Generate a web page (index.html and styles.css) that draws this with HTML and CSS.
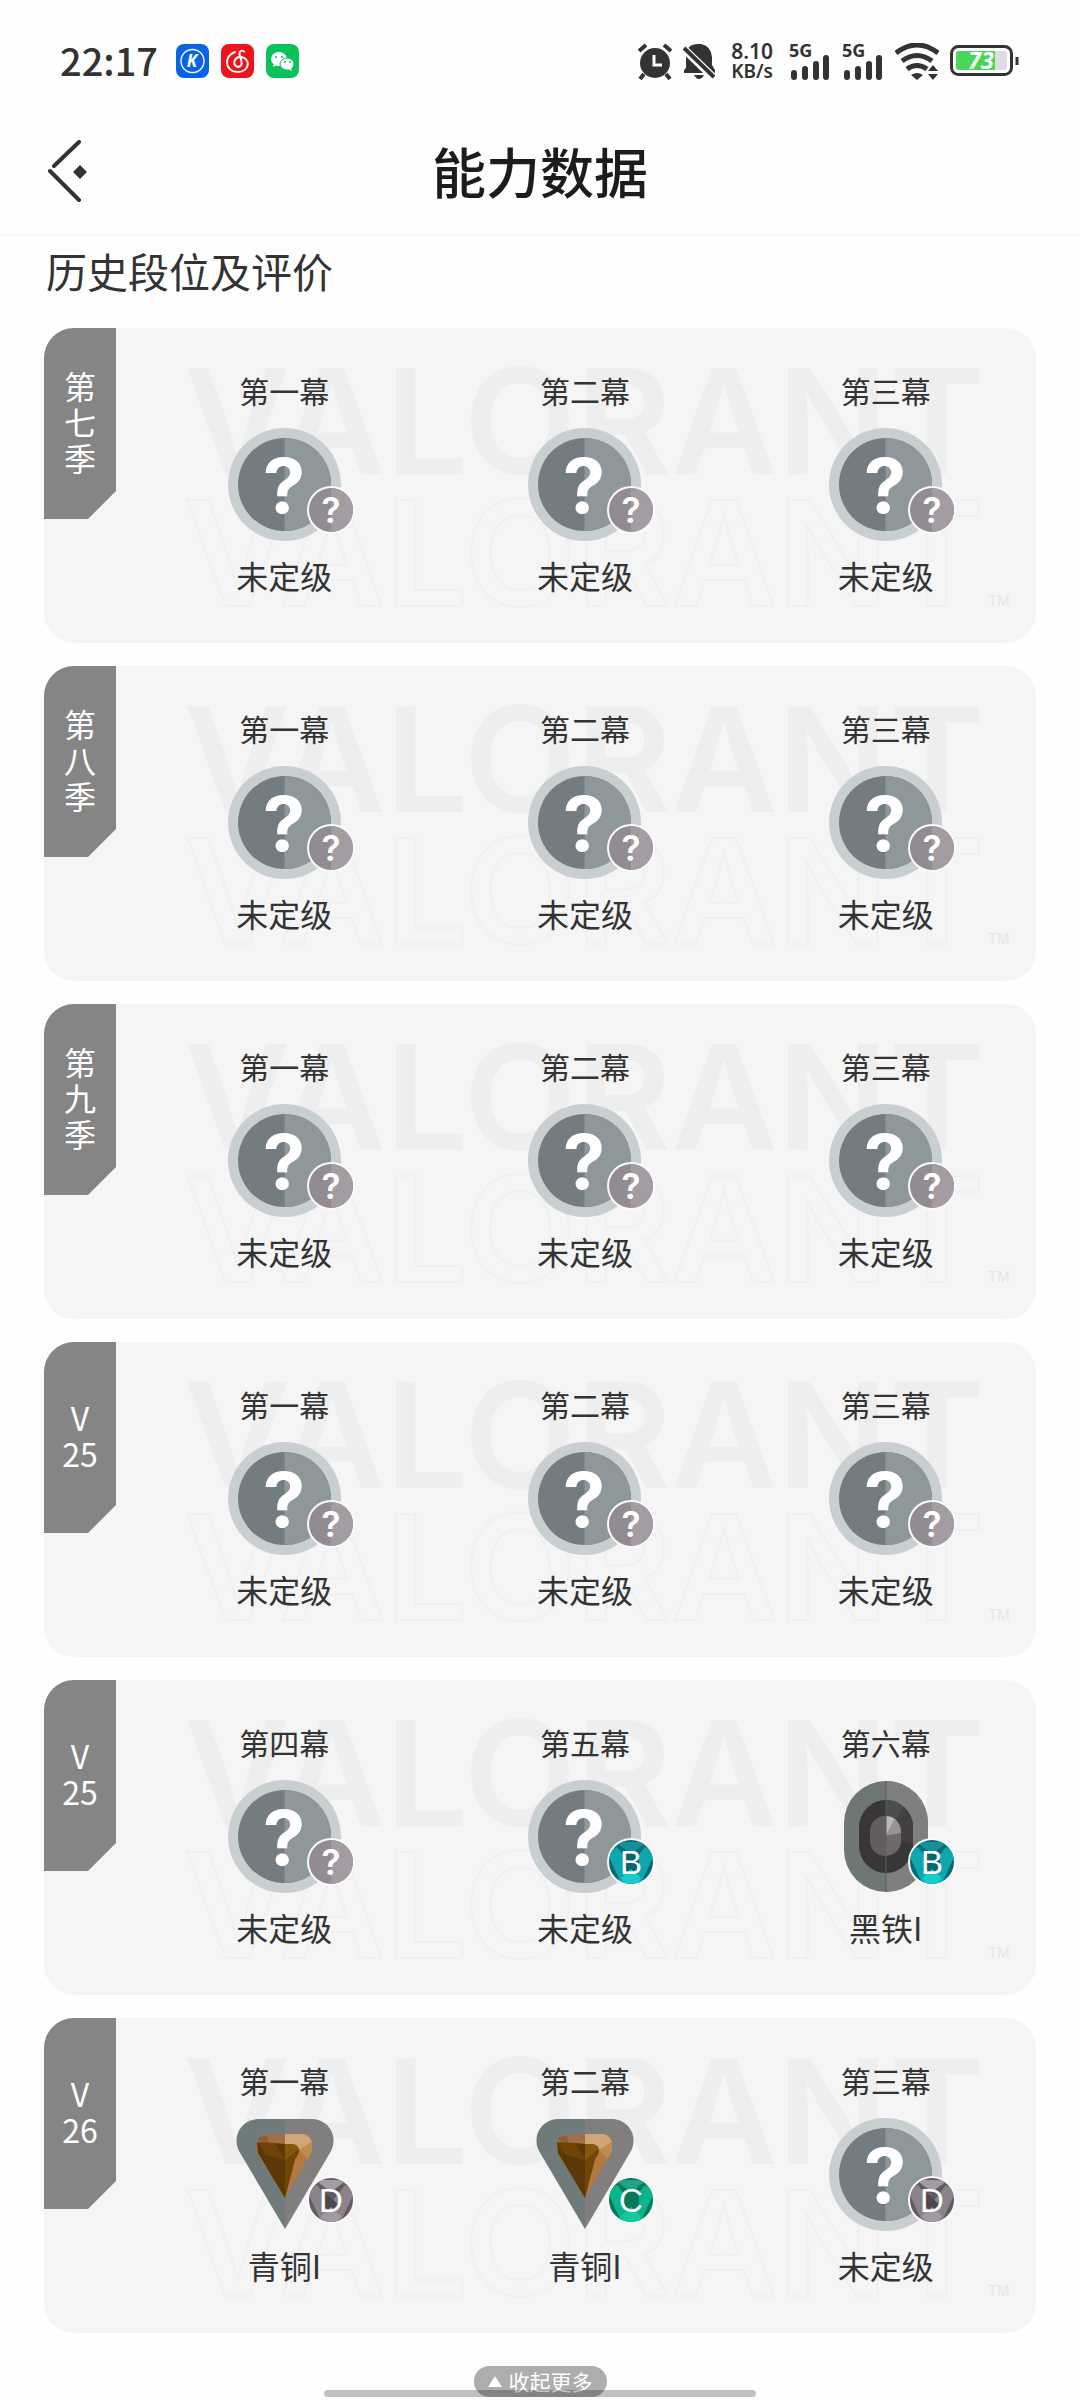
FILE: index.html
```html
<!DOCTYPE html>
<html lang="zh-CN">
<head>
    <meta charset="UTF-8">
    <meta name="viewport" content="width=device-width, initial-scale=1.0">
    <title>能力数据</title>
    <link rel="stylesheet" href="styles.css">
</head>
<body>
    <svg class="sprite" aria-hidden="true">
        <defs>
            <clipPath id="badge-clip"><circle cx="24" cy="24" r="22"/></clipPath>
        </defs>
        <symbol id="watermark" viewBox="0 0 850 260">
            <text class="wm-fill" x="0" y="111">VALORANT</text>
            <text class="wm-line" x="0" y="243">VALORANT</text>
            <text class="wm-tm" x="804" y="243">TM</text>
        </symbol>
        <symbol id="unranked" viewBox="0 0 113 113">
            <circle cx="56.5" cy="56.5" r="56.5" fill="#c9cfd1"/>
            <circle cx="56.5" cy="56.5" r="46.5" fill="#737c80"/>
            <path d="M56.5 10a46.5 46.5 0 0 1 0 93z" fill="#8e9799"/>
            <text class="rank-mark" x="56" y="85">?</text>
        </symbol>
        <symbol id="iron" viewBox="0 0 113 113">
            <rect x="15" y="1" width="84" height="111" rx="42" fill="#6f7775"/>
            <path d="M57 1a42 42 0 0 1 42 42v27a42 42 0 0 1-42 42z" fill="#7f7f7e"/>
            <rect x="30" y="20" width="54" height="73" rx="27" fill="#383637"/>
            <path d="M57 20v36l18-29q-8-7-18-7z" fill="#4a4e4c"/>
            <path d="M57 56l18-29q9 8 9 20v17z" fill="#434041"/>
            <rect x="41" y="36" width="31" height="40" rx="15" fill="#625d5e"/>
            <path d="M57 36v20l9-17q-4-3-9-3z" fill="#b9b7b7"/>
            <path d="M57 56l9-17q6 5 6 14z" fill="#979293"/>
            <path d="M57 56l15-3v9q-2 11-15 14z" fill="#6e696a"/>
            <path d="M57 1v111" stroke="#5a5d5c" stroke-width="1"/>
        </symbol>
        <symbol id="bronze" viewBox="0 0 113 113">
            <path d="M30 1h27v110L11 33C4 19 12 2 30 1z" fill="#6f7a7a"/>
            <path d="M57 1h27c18 1 26 18 19 32L57 111z" fill="#807f7e"/>
            <path d="M36 17l21-1v64L29 34q-3-12 7-17z" fill="#a06f48"/>
            <path d="M57 16h19q6 2 8 8v8L57 80z" fill="#b5793f"/>
            <path d="M57 16h19q6 2 8 8l-13 8-5-6h-9z" fill="#d0a577"/>
            <path d="M84 24v9l-4 8-9-9z" fill="#c08b51"/>
            <path d="M30 22l11 4-2-8q-8 0-9 4z" fill="#8f5c38"/>
            <path d="M29 24q4 5 10 5l8-4 10 1v54L30 35z" fill="#5d3806"/>
            <path d="M57 26h8q5 1 6 5 0 6-4 10L57 80z" fill="#85580c"/>
            <path d="M29 24l9 13 19 5-10-17z" fill="#704407"/>
            <path d="M57 42l14-11q0 5-4 10L57 80z" fill="#704605"/>
        </symbol>
        <symbol id="badge-q" viewBox="0 0 48 48">
            <circle cx="24" cy="24" r="24" fill="#fafafa"/>
            <circle cx="24" cy="24" r="22" fill="#928b91"/>
            <path d="M24 2a22 22 0 0 1 0 44z" fill="#a39da3"/>
            <text class="badge-mark" x="24" y="37">?</text>
        </symbol>
        <symbol id="badge-b" viewBox="0 0 48 48">
            <circle cx="24" cy="24" r="24" fill="#f4fbfb"/>
            <g clip-path="url(#badge-clip)">
                <path d="M0 0h48v48H0z" fill="#076a72"/>
                <path d="M8 4h32L24 16z" fill="#13929a"/>
                <path d="M0 15l10-6 14 18L38 9l10 6-14 30H14z" fill="#0fa6ad"/>
                <path d="M16 15h16v14l-8 8-8-8z" fill="#07656d"/>
                <path d="M14 40l10-9 10 9-4 8H18z" fill="#18c9cd"/>
            </g>
            <text class="badge-letter" x="24" y="36">B</text>
        </symbol>
        <symbol id="badge-c" viewBox="0 0 48 48">
            <circle cx="24" cy="24" r="24" fill="#f4fbf9"/>
            <g clip-path="url(#badge-clip)">
                <path d="M0 0h48v48H0z" fill="#07785c"/>
                <path d="M8 4h32L24 16z" fill="#20a486"/>
                <path d="M0 15l10-6 14 18L38 9l10 6-14 30H14z" fill="#0db48b"/>
                <path d="M16 15h16v14l-8 8-8-8z" fill="#07795f"/>
                <path d="M14 40l10-9 10 9-4 8H18z" fill="#18c79d"/>
            </g>
            <text class="badge-letter" x="24" y="36">C</text>
        </symbol>
        <symbol id="badge-d" viewBox="0 0 48 48">
            <circle cx="24" cy="24" r="24" fill="#faf8fa"/>
            <g clip-path="url(#badge-clip)">
                <path d="M0 0h48v48H0z" fill="#625961"/>
                <path d="M8 4h32L24 16z" fill="#a39ba2"/>
                <path d="M0 15l10-6 14 18L38 9l10 6-14 30H14z" fill="#8b838a"/>
                <path d="M16 15l16 14-8 8-8-8z" fill="#4e464d"/>
                <path d="M14 40l10-9 10 9-4 8H18z" fill="#a29aa1"/>
            </g>
            <text class="badge-letter" x="24" y="36">D</text>
        </symbol>
        <symbol id="signal" viewBox="0 0 42 37">
            <text class="net-type" x="0" y="14">5G</text>
            <path d="M5 30v4M16 26v8M27 21v13M37 15v19" stroke="#333" stroke-width="6" stroke-linecap="round"/>
        </symbol>
    </svg>

    <div class="status-bar">
        <div class="status-left">
            <time class="clock">22:17</time>
            <svg class="app-icon" viewBox="0 0 33 34" role="img" aria-label="K">
                <rect width="33" height="34" rx="8" fill="#0863ea"/>
                <circle cx="16.500" cy="17" r="11.500" fill="none" stroke="#fff" stroke-width="1.400"/>
                <text class="k-mark" x="16" y="23">K</text>
            </svg>
            <svg class="app-icon" viewBox="0 0 33 34" role="img" aria-label="音乐">
                <rect width="33" height="34" rx="8" fill="#f0131b"/>
                <path d="M14 8C2 12 4 28 16.500 28 29 28 30 14 20 13c-6-1-9 7-4.500 9.500 4 1.500 6-2 5-5L18.500 10c-.5-3 2-4 4.500-2.500" fill="none" stroke="#fff" stroke-width="2" stroke-linecap="round"/>
            </svg>
            <svg class="app-icon" viewBox="0 0 33 34" role="img" aria-label="微信">
                <rect width="33" height="34" rx="8" fill="#0ac25b"/>
                <path d="M8 19l-1 4 4-2z" fill="#fff"/>
                <ellipse cx="13" cy="15" rx="8" ry="7" fill="#fff"/>
                <ellipse cx="21" cy="20" rx="7" ry="6" fill="#fff" stroke="#0ac25b"/>
                <path d="M22 25l4 2-1-3z" fill="#fff"/>
                <g fill="#0ac25b"><circle cx="10" cy="13" r="1"/><circle cx="16" cy="13" r="1"/><circle cx="19" cy="18" r="1"/><circle cx="24" cy="18" r="1"/></g>
            </svg>
        </div>
        <div class="status-right">
            <svg width="34" height="37" viewBox="0 0 34 37" role="img" aria-label="闹钟">
                <circle cx="17" cy="20" r="15" fill="#333"/>
                <path d="M1 8l7-6M33 8l-7-6M6 31l-4 5M28 31l4 5" stroke="#333" stroke-width="4"/>
                <path d="M16 12v10h8" fill="none" stroke="#fdfdfd" stroke-width="3"/>
            </svg>
            <svg width="32" height="37" viewBox="0 0 32 37" role="img" aria-label="静音">
                <path d="M3 25V12Q4 1 15 1h3q10 2 11 13v8l3 5v3H1v-3z" fill="#333"/>
                <path d="M11 32h10q-2 4-5 4t-5-4z" fill="#333"/>
                <path d="M-1 4l33 32" stroke="#fdfdfd" stroke-width="8"/>
                <path d="M1 5l30 29" stroke="#333" stroke-width="4"/>
            </svg>
            <div class="net-speed"><b>8.10</b><span>KB/s</span></div>
            <svg width="42" height="37" role="img" aria-label="5G 信号"><use href="#signal"/></svg>
            <svg width="42" height="37" role="img" aria-label="5G 信号"><use href="#signal"/></svg>
            <svg width="44" height="37" viewBox="0 0 44 37" role="img" aria-label="无线网络">
                <g fill="none" stroke="#333" stroke-width="5">
                    <path d="M1 10q21-16 42 0M7 18q15-11 30 0M12 26q10-7 20 0"/>
                </g>
                <path d="M16 32q6-4 12 0l-6 5zM33 28l5-6 5 6zM33 31l5 6 5-6z" fill="#333"/>
            </svg>
            <svg width="70" height="32" viewBox="0 0 70 32" role="img" aria-label="电量 73%">
                <rect x="1.500" y="1.500" width="60" height="28" rx="7" fill="#fff" stroke="#333" stroke-width="3"/>
                <rect x="6" y="6" width="51" height="19" rx="3" fill="#dedee2"/>
                <path d="M9 6h36v19H9q-3 0-3-3V9q0-3 3-3z" fill="#4bd65a"/>
                <path d="M67 12v8" stroke="#333" stroke-width="3"/>
                <text class="battery-text" x="31" y="24">73</text>
            </svg>
        </div>
    </div>

    <header class="page-header">
        <button class="back-btn" aria-label="返回">
            <svg width="40" height="62" viewBox="0 0 40 62">
                <path d="M31 2L6 26M2 31l29 29" fill="none" stroke="#333" stroke-width="4" stroke-linecap="round"/>
                <path d="M32 25l7 7-7 7-7-7z" fill="#333"/>
            </svg>
        </button>
        <h1>能力数据</h1>
    </header>

    <main>
        <h2>历史段位及评价</h2>

        <section class="season">
            <svg class="watermark" aria-hidden="true"><use href="#watermark"/></svg>
            <h3 class="season-tab">第<br>七<br>季</h3>
            <ul class="acts">
                <li><span class="act">第一幕</span><div class="rank"><svg><use href="#unranked"/></svg><svg class="badge"><use href="#badge-q"/></svg></div><span class="level">未定级</span></li>
                <li><span class="act">第二幕</span><div class="rank"><svg><use href="#unranked"/></svg><svg class="badge"><use href="#badge-q"/></svg></div><span class="level">未定级</span></li>
                <li><span class="act">第三幕</span><div class="rank"><svg><use href="#unranked"/></svg><svg class="badge"><use href="#badge-q"/></svg></div><span class="level">未定级</span></li>
            </ul>
        </section>

        <section class="season">
            <svg class="watermark" aria-hidden="true"><use href="#watermark"/></svg>
            <h3 class="season-tab">第<br>八<br>季</h3>
            <ul class="acts">
                <li><span class="act">第一幕</span><div class="rank"><svg><use href="#unranked"/></svg><svg class="badge"><use href="#badge-q"/></svg></div><span class="level">未定级</span></li>
                <li><span class="act">第二幕</span><div class="rank"><svg><use href="#unranked"/></svg><svg class="badge"><use href="#badge-q"/></svg></div><span class="level">未定级</span></li>
                <li><span class="act">第三幕</span><div class="rank"><svg><use href="#unranked"/></svg><svg class="badge"><use href="#badge-q"/></svg></div><span class="level">未定级</span></li>
            </ul>
        </section>

        <section class="season">
            <svg class="watermark" aria-hidden="true"><use href="#watermark"/></svg>
            <h3 class="season-tab">第<br>九<br>季</h3>
            <ul class="acts">
                <li><span class="act">第一幕</span><div class="rank"><svg><use href="#unranked"/></svg><svg class="badge"><use href="#badge-q"/></svg></div><span class="level">未定级</span></li>
                <li><span class="act">第二幕</span><div class="rank"><svg><use href="#unranked"/></svg><svg class="badge"><use href="#badge-q"/></svg></div><span class="level">未定级</span></li>
                <li><span class="act">第三幕</span><div class="rank"><svg><use href="#unranked"/></svg><svg class="badge"><use href="#badge-q"/></svg></div><span class="level">未定级</span></li>
            </ul>
        </section>

        <section class="season">
            <svg class="watermark" aria-hidden="true"><use href="#watermark"/></svg>
            <h3 class="season-tab">V<br>25</h3>
            <ul class="acts">
                <li><span class="act">第一幕</span><div class="rank"><svg><use href="#unranked"/></svg><svg class="badge"><use href="#badge-q"/></svg></div><span class="level">未定级</span></li>
                <li><span class="act">第二幕</span><div class="rank"><svg><use href="#unranked"/></svg><svg class="badge"><use href="#badge-q"/></svg></div><span class="level">未定级</span></li>
                <li><span class="act">第三幕</span><div class="rank"><svg><use href="#unranked"/></svg><svg class="badge"><use href="#badge-q"/></svg></div><span class="level">未定级</span></li>
            </ul>
        </section>

        <section class="season">
            <svg class="watermark" aria-hidden="true"><use href="#watermark"/></svg>
            <h3 class="season-tab">V<br>25</h3>
            <ul class="acts">
                <li><span class="act">第四幕</span><div class="rank"><svg><use href="#unranked"/></svg><svg class="badge"><use href="#badge-q"/></svg></div><span class="level">未定级</span></li>
                <li><span class="act">第五幕</span><div class="rank"><svg><use href="#unranked"/></svg><svg class="badge"><use href="#badge-b"/></svg></div><span class="level">未定级</span></li>
                <li><span class="act">第六幕</span><div class="rank"><svg><use href="#iron"/></svg><svg class="badge"><use href="#badge-b"/></svg></div><span class="level">黑铁I</span></li>
            </ul>
        </section>

        <section class="season">
            <svg class="watermark" aria-hidden="true"><use href="#watermark"/></svg>
            <h3 class="season-tab">V<br>26</h3>
            <ul class="acts">
                <li><span class="act">第一幕</span><div class="rank"><svg><use href="#bronze"/></svg><svg class="badge"><use href="#badge-d"/></svg></div><span class="level">青铜I</span></li>
                <li><span class="act">第二幕</span><div class="rank"><svg><use href="#bronze"/></svg><svg class="badge"><use href="#badge-c"/></svg></div><span class="level">青铜I</span></li>
                <li><span class="act">第三幕</span><div class="rank"><svg><use href="#unranked"/></svg><svg class="badge"><use href="#badge-d"/></svg></div><span class="level">未定级</span></li>
            </ul>
        </section>
    </main>

    <footer>
        <button class="collapse-btn">
            <svg width="14" height="11" viewBox="0 0 14 11" aria-hidden="true"><path d="M7 0l7 11H0z" fill="#fff"/></svg>
            收起更多
        </button>
    </footer>
    <div class="home-bar"></div>
</body>
</html>
```
FILE: styles.css
```css
* {
    box-sizing: border-box;
}

body {
    margin: 0;
    background: #fefefe;
    color: #333;
    font-family: "Noto Sans CJK SC", sans-serif;
}

h1, h2, h3, ul {
    margin: 0;
    padding: 0;
}

button {
    border: none;
    padding: 0;
    font-family: inherit;
    cursor: pointer;
}

.sprite {
    position: absolute;
    width: 0;
    height: 0;
}

/* status bar */
.status-bar {
    display: flex;
    justify-content: space-between;
    align-items: center;
    height: 122px;
    padding: 0 60px;
}

.status-left {
    display: flex;
    align-items: center;
    gap: 12px;
}

.clock {
    font-size: 38px;
    font-weight: 500;
    line-height: 38px;
    padding-bottom: 2px;
    margin-right: 6px;
}

.app-icon {
    width: 33px;
    height: 34px;
}

.k-mark {
    fill: #fff;
    font: italic bold 17px "Open Sans", sans-serif;
    text-anchor: middle;
}

.status-right {
    display: flex;
    align-items: center;
    gap: 11px;
}

.net-speed {
    display: flex;
    flex-direction: column;
    margin: 0 5px;
    font-family: "Noto Sans", sans-serif;
    font-size: 19px;
    font-weight: 600;
    line-height: 20px;
}

.net-speed b {
    font-size: 21px;
    font-weight: 600;
}

.net-type {
    fill: #333;
    font: bold 18px "Noto Sans", sans-serif;
}

.battery-text {
    fill: #fff;
    font: italic bold 23px "Noto Sans", sans-serif;
    text-anchor: middle;
}

/* title bar */
.page-header {
    display: grid;
    grid-template-columns: 40px 1fr 40px;
    align-items: center;
    height: 114px;
    padding: 0 48px 14px;
    border-bottom: 2px solid #f6f6f6;
}

.back-btn {
    display: flex;
    background: none;
}

h1 {
    color: #1c1c1c;
    font-size: 54px;
    font-weight: 500;
    line-height: 64px;
    text-align: center;
}

main {
    display: flex;
    flex-direction: column;
    gap: 23px;
    padding: 0 44px;
}

h2 {
    padding-left: 2px;
    font-size: 41px;
    font-weight: 400;
    line-height: 69px;
}

/* season card */
.season {
    position: relative;
    padding: 40px 0 50px 90px;
    border-radius: 30px;
    background: #f5f5f5;
    overflow: hidden;
}

.watermark {
    position: absolute;
    top: 35px;
    left: 140px;
    width: 850px;
    height: 260px;
}

.wm-fill {
    fill: #eee;
    font: 600 146px Inter, sans-serif;
}

.wm-line {
    fill: none;
    stroke: #f0f0f0;
    stroke-width: 2px;
    font: 600 146px Inter, sans-serif;
}

.wm-tm {
    fill: #e6e6e6;
    font: 14px Inter, sans-serif;
}

.season-tab {
    position: absolute;
    top: 0;
    left: 0;
    display: flex;
    align-items: center;
    justify-content: center;
    width: 72px;
    height: 191px;
    padding-bottom: 6px;
    background: #858585;
    clip-path: polygon(0 0, 100% 0, 100% 163px, 44px 100%, 0 100%);
    color: #fff;
    font-size: 32px;
    font-weight: 400;
    line-height: 36px;
    text-align: center;
}

.acts {
    position: relative;
    display: grid;
    grid-template-columns: repeat(3, 1fr);
    list-style: none;
}

.acts li {
    display: flex;
    flex-direction: column;
    align-items: center;
    gap: 16px;
}

.act {
    font-size: 30px;
    line-height: 44px;
}

.level {
    font-size: 32px;
    line-height: 36px;
}

.rank {
    position: relative;
    width: 113px;
    height: 113px;
}

.rank svg {
    display: block;
    width: 113px;
    height: 113px;
}

.rank .badge {
    position: absolute;
    right: -14px;
    bottom: 7px;
    width: 48px;
    height: 48px;
}

.rank-mark {
    fill: #fff;
    font: 700 76px Inter, sans-serif;
    text-anchor: middle;
}

.badge-mark {
    fill: #fff;
    font: 600 35px Inter, sans-serif;
    text-anchor: middle;
}

.badge-letter {
    fill: #fff;
    font: 33px "Liberation Sans", sans-serif;
    text-anchor: middle;
}

/* bottom */
footer {
    display: flex;
    justify-content: center;
    padding: 33px 0 2px;
}

.collapse-btn {
    display: flex;
    align-items: center;
    gap: 7px;
    height: 31px;
    padding: 0 14px;
    border-radius: 16px;
    background: #adadad;
    color: #fff;
    font-size: 21px;
    line-height: 31px;
}

.home-bar {
    position: fixed;
    bottom: 3px;
    left: 30%;
    right: 30%;
    height: 7px;
    border-radius: 4px;
    background: rgba(0, 0, 0, 0.24);
}
```
